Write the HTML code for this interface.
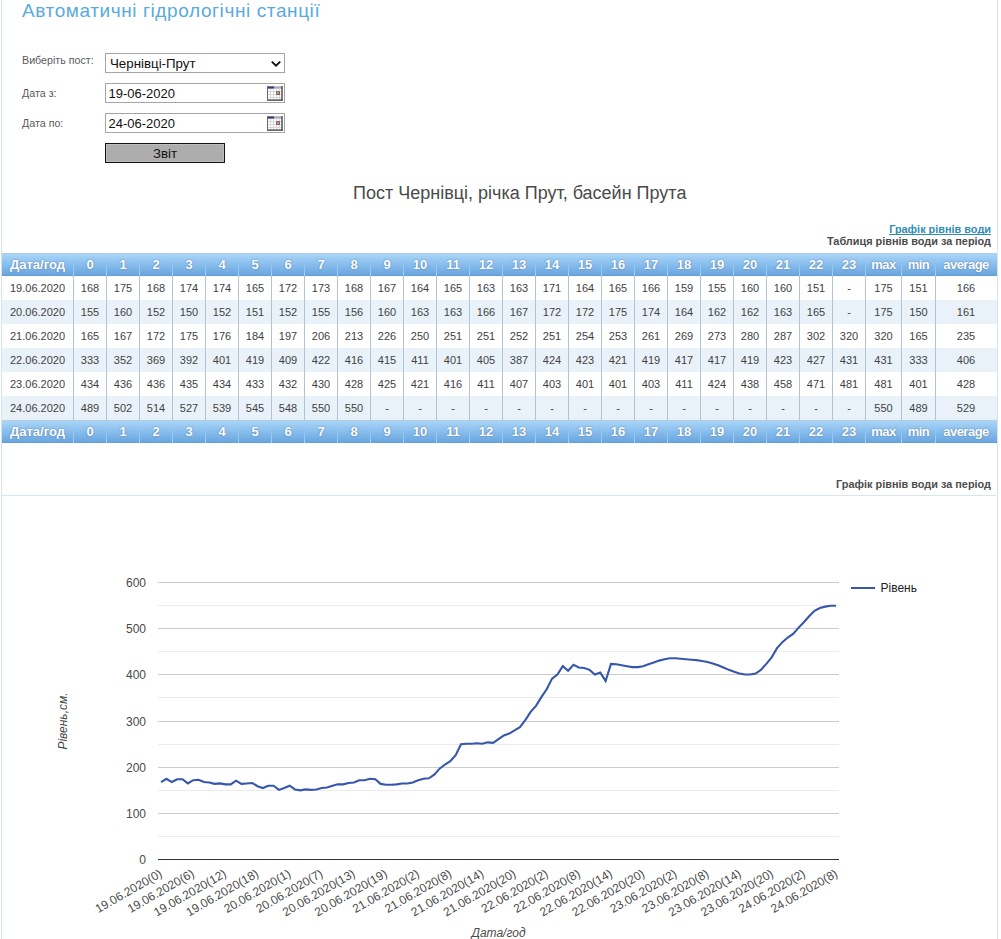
<!DOCTYPE html>
<html><head><meta charset="utf-8">
<style>
html,body{margin:0;padding:0;background:#fff;}
body{width:1001px;height:939px;position:relative;overflow:hidden;font-family:"Liberation Sans",sans-serif;}
.vl{position:absolute;top:0;width:1px;height:939px;background:#d3e5f0;}
.abs{position:absolute;white-space:nowrap;}
.title{left:22px;top:-0.5px;font-size:19px;letter-spacing:0.6px;color:#5aaadd;}
.lbl{left:22px;font-size:10.7px;color:#5a5a5a;}
.box{position:absolute;left:105px;width:178px;height:18px;border:1px solid #a5a5a5;background:#fff;}
.box span{position:absolute;left:2.5px;top:2px;font-size:13px;color:#111;}
.box span.s{left:4px;top:1.5px;font-size:13.3px;}
.btn{position:absolute;left:105px;top:143px;width:116px;height:16px;border:1px solid #111;box-shadow:inset 0 0 0 1px #bdbdbd;padding:1px;background:#adadae;font-size:13.3px;text-align:center;line-height:17px;color:#111;}
.h2{left:353px;top:183px;font-size:18px;color:#4a4a4a;}
.lnk{right:10px;top:223px;font-size:10.9px;font-weight:bold;color:#2f8db5;text-decoration:underline;text-decoration-skip-ink:none;}
.sub{right:10px;top:235px;font-size:10.9px;font-weight:bold;color:#4a4a4a;}
table{position:absolute;left:2px;top:253px;border-collapse:separate;border-spacing:0;table-layout:fixed;width:995px;}
th,td{padding:0;text-align:center;overflow:hidden;white-space:nowrap;}
tr.hd th{height:23px;font-size:13px;font-weight:bold;color:#fff;text-shadow:0 0 1.5px rgba(50,80,120,.75);border-right:1px solid transparent;border-image:linear-gradient(rgba(168,222,250,0) 35%,#a8defa 100%) 1;}
tr.hd th:last-child{border-image:none;}
tr.hd th{background:linear-gradient(#b4cde0 0,#b4cde0 1px,#a9d5f8 1px,#8cc0ee 45%,#6aa6df 95%,#5c9ad6 100%);}
td{height:24px;font-size:11px;color:#424242;border-right:1px solid #b3c2d0;}
th.ls{letter-spacing:-0.5px;}
td:last-child{border-right-color:#fff;}
tr.alt td:last-child{border-right-color:#e9f2f9;}
tr.alt td{background:#e9f2f9;}
.sub2{right:10px;top:478px;font-size:10.9px;font-weight:bold;color:#4d4d4d;}
.hl{position:absolute;left:1px;top:495px;width:995px;height:1px;background:#d6e6f0;}
svg{position:absolute;left:0;top:0;}
svg text{font-family:"Liberation Sans",sans-serif;font-size:12px;fill:#4a4a4a;}
</style></head><body>
<div class="vl" style="left:1px"></div>
<div class="vl" style="left:997px"></div>
<div class="abs title">Автоматичні гідрологічні станції</div>
<div class="abs lbl" style="top:54px">Виберіть пост:</div>
<div class="abs lbl" style="top:87px">Дата з:</div>
<div class="abs lbl" style="top:117px">Дата по:</div>
<div class="box" style="top:53px"><span class='s'>Чернівці-Прут</span>
<svg width="12" height="8" style="left:164px;top:6px" viewBox="0 0 12 8"><path d="M1.8,1.6 L6,5.6 L10.2,1.6" fill="none" stroke="#111" stroke-width="1.9"/></svg></div>
<div class="box" style="top:83px"><span>19-06-2020</span><svg width="17" height="15" style="left:160px;top:2px" viewBox="0 0 17 15">
<rect x="1" y="0" width="16" height="15" fill="#fff"/>
<rect x="1.5" y="0.3" width="7" height="2.4" fill="#3b3a70"/>
<rect x="8.5" y="0.3" width="7" height="2.4" fill="#aeaab2"/>
<g fill="#d8d8dc">
<rect x="1" y="5" width="15" height="1"/><rect x="1" y="8" width="15" height="1"/><rect x="1" y="11" width="15" height="1"/>
<rect x="4" y="2.7" width="1" height="11"/><rect x="7" y="2.7" width="1" height="11"/><rect x="10" y="2.7" width="1" height="11"/><rect x="13" y="2.7" width="1" height="11"/>
</g>
<rect x="10.8" y="5.8" width="2.5" height="2.5" fill="#fff" stroke="#7a3c32" stroke-width="1.1"/>
<rect x="1" y="13.5" width="15.5" height="1.2" fill="#2a2a2a"/>
<rect x="1" y="0" width="1" height="14" fill="#6a6a6a"/>
<rect x="15.4" y="0" width="1.2" height="14.7" fill="#2a2a2a"/>
</svg></div>
<div class="box" style="top:113px"><span>24-06-2020</span><svg width="17" height="15" style="left:160px;top:2px" viewBox="0 0 17 15">
<rect x="1" y="0" width="16" height="15" fill="#fff"/>
<rect x="1.5" y="0.3" width="7" height="2.4" fill="#3b3a70"/>
<rect x="8.5" y="0.3" width="7" height="2.4" fill="#aeaab2"/>
<g fill="#d8d8dc">
<rect x="1" y="5" width="15" height="1"/><rect x="1" y="8" width="15" height="1"/><rect x="1" y="11" width="15" height="1"/>
<rect x="4" y="2.7" width="1" height="11"/><rect x="7" y="2.7" width="1" height="11"/><rect x="10" y="2.7" width="1" height="11"/><rect x="13" y="2.7" width="1" height="11"/>
</g>
<rect x="10.8" y="5.8" width="2.5" height="2.5" fill="#fff" stroke="#7a3c32" stroke-width="1.1"/>
<rect x="1" y="13.5" width="15.5" height="1.2" fill="#2a2a2a"/>
<rect x="1" y="0" width="1" height="14" fill="#6a6a6a"/>
<rect x="15.4" y="0" width="1.2" height="14.7" fill="#2a2a2a"/>
</svg></div>
<div class="btn">Звіт</div>
<div class="abs h2">Пост Чернівці, річка Прут, басейн Прута</div>
<div class="abs lnk">Графік рівнів води</div>
<div class="abs sub">Таблиця рівнів води за період</div>
<table>
<tr class='hd'><th style='width:71px'>Дата/год</th><th style='width:32px'>0</th><th style='width:32px'>1</th><th style='width:32px'>2</th><th style='width:32px'>3</th><th style='width:32px'>4</th><th style='width:32px'>5</th><th style='width:32px'>6</th><th style='width:32px'>7</th><th style='width:32px'>8</th><th style='width:32px'>9</th><th style='width:32px'>10</th><th style='width:32px'>11</th><th style='width:32px'>12</th><th style='width:32px'>13</th><th style='width:32px'>14</th><th style='width:32px'>15</th><th style='width:32px'>16</th><th style='width:32px'>17</th><th style='width:32px'>18</th><th style='width:32px'>19</th><th style='width:32px'>20</th><th style='width:32px'>21</th><th style='width:32px'>22</th><th style='width:32px'>23</th><th style='width:35px' class=ls>max</th><th style='width:33px' class=ls>min</th><th style='width:60px' class=ls>average</th></tr>
<tr class=''><td>19.06.2020</td><td>168</td><td>175</td><td>168</td><td>174</td><td>174</td><td>165</td><td>172</td><td>173</td><td>168</td><td>167</td><td>164</td><td>165</td><td>163</td><td>163</td><td>171</td><td>164</td><td>165</td><td>166</td><td>159</td><td>155</td><td>160</td><td>160</td><td>151</td><td>-</td><td>175</td><td>151</td><td>166</td></tr><tr class='alt'><td>20.06.2020</td><td>155</td><td>160</td><td>152</td><td>150</td><td>152</td><td>151</td><td>152</td><td>155</td><td>156</td><td>160</td><td>163</td><td>163</td><td>166</td><td>167</td><td>172</td><td>172</td><td>175</td><td>174</td><td>164</td><td>162</td><td>162</td><td>163</td><td>165</td><td>-</td><td>175</td><td>150</td><td>161</td></tr><tr class=''><td>21.06.2020</td><td>165</td><td>167</td><td>172</td><td>175</td><td>176</td><td>184</td><td>197</td><td>206</td><td>213</td><td>226</td><td>250</td><td>251</td><td>251</td><td>252</td><td>251</td><td>254</td><td>253</td><td>261</td><td>269</td><td>273</td><td>280</td><td>287</td><td>302</td><td>320</td><td>320</td><td>165</td><td>235</td></tr><tr class='alt'><td>22.06.2020</td><td>333</td><td>352</td><td>369</td><td>392</td><td>401</td><td>419</td><td>409</td><td>422</td><td>416</td><td>415</td><td>411</td><td>401</td><td>405</td><td>387</td><td>424</td><td>423</td><td>421</td><td>419</td><td>417</td><td>417</td><td>419</td><td>423</td><td>427</td><td>431</td><td>431</td><td>333</td><td>406</td></tr><tr class=''><td>23.06.2020</td><td>434</td><td>436</td><td>436</td><td>435</td><td>434</td><td>433</td><td>432</td><td>430</td><td>428</td><td>425</td><td>421</td><td>416</td><td>411</td><td>407</td><td>403</td><td>401</td><td>401</td><td>403</td><td>411</td><td>424</td><td>438</td><td>458</td><td>471</td><td>481</td><td>481</td><td>401</td><td>428</td></tr><tr class='alt'><td>24.06.2020</td><td>489</td><td>502</td><td>514</td><td>527</td><td>539</td><td>545</td><td>548</td><td>550</td><td>550</td><td>-</td><td>-</td><td>-</td><td>-</td><td>-</td><td>-</td><td>-</td><td>-</td><td>-</td><td>-</td><td>-</td><td>-</td><td>-</td><td>-</td><td>-</td><td>550</td><td>489</td><td>529</td></tr>
<tr class='hd'><th style='width:71px'>Дата/год</th><th style='width:32px'>0</th><th style='width:32px'>1</th><th style='width:32px'>2</th><th style='width:32px'>3</th><th style='width:32px'>4</th><th style='width:32px'>5</th><th style='width:32px'>6</th><th style='width:32px'>7</th><th style='width:32px'>8</th><th style='width:32px'>9</th><th style='width:32px'>10</th><th style='width:32px'>11</th><th style='width:32px'>12</th><th style='width:32px'>13</th><th style='width:32px'>14</th><th style='width:32px'>15</th><th style='width:32px'>16</th><th style='width:32px'>17</th><th style='width:32px'>18</th><th style='width:32px'>19</th><th style='width:32px'>20</th><th style='width:32px'>21</th><th style='width:32px'>22</th><th style='width:32px'>23</th><th style='width:35px' class=ls>max</th><th style='width:33px' class=ls>min</th><th style='width:60px' class=ls>average</th></tr>
</table>
<div class="abs sub2">Графік рівнів води за період</div>
<div class="hl"></div>
<svg width="1001" height="939">
<rect x='158' y='836' width='681' height='1' fill='#ebebeb'/><rect x='158' y='813' width='681' height='1' fill='#cccccc'/><rect x='158' y='790' width='681' height='1' fill='#ebebeb'/><rect x='158' y='767' width='681' height='1' fill='#cccccc'/><rect x='158' y='744' width='681' height='1' fill='#ebebeb'/><rect x='158' y='721' width='681' height='1' fill='#cccccc'/><rect x='158' y='697' width='681' height='1' fill='#ebebeb'/><rect x='158' y='674' width='681' height='1' fill='#cccccc'/><rect x='158' y='651' width='681' height='1' fill='#ebebeb'/><rect x='158' y='628' width='681' height='1' fill='#cccccc'/><rect x='158' y='605' width='681' height='1' fill='#ebebeb'/><rect x='158' y='582' width='681' height='1' fill='#cccccc'/>
<rect x='158' y='859' width='681' height='1' fill='#333'/>
<text x='146' y='863.5' text-anchor='end'>0</text><text x='146' y='817.5' text-anchor='end'>100</text><text x='146' y='771.5' text-anchor='end'>200</text><text x='146' y='725.5' text-anchor='end'>300</text><text x='146' y='678.5' text-anchor='end'>400</text><text x='146' y='632.5' text-anchor='end'>500</text><text x='146' y='586.5' text-anchor='end'>600</text>
<path d="M161.08,781.44 L166.43,778.21 L171.79,781.44 L177.15,778.67 L182.50,778.67 L187.86,782.83 L193.21,779.59 L198.57,779.13 L203.93,781.44 L209.28,781.90 L214.64,783.29 L219.99,782.83 L225.35,783.75 L230.70,783.75 L236.06,780.06 L241.42,783.29 L246.77,782.83 L252.13,782.36 L257.48,785.60 L262.84,787.44 L268.20,785.13 L273.55,785.13 L278.91,789.29 L284.26,787.44 L289.62,785.13 L294.98,788.83 L300.33,789.75 L305.69,788.83 L311.04,789.29 L316.40,788.83 L321.76,787.44 L327.11,786.98 L332.47,785.13 L337.82,783.75 L343.18,783.75 L348.53,782.36 L353.89,781.90 L359.25,779.59 L364.60,779.59 L369.96,778.21 L375.31,778.67 L380.67,783.29 L386.03,784.21 L391.38,784.21 L396.74,783.75 L402.09,782.83 L407.45,782.83 L412.81,781.90 L418.16,779.59 L423.52,778.21 L428.87,777.75 L434.23,774.05 L439.59,768.05 L444.94,763.90 L450.30,760.66 L455.65,754.66 L461.01,743.58 L466.36,743.12 L471.72,743.12 L477.08,742.66 L482.43,743.12 L487.79,741.74 L493.14,742.20 L498.50,738.50 L503.86,734.81 L509.21,732.97 L514.57,729.73 L519.92,726.50 L525.28,719.58 L530.64,711.27 L535.99,705.26 L541.35,696.49 L546.70,688.64 L552.06,678.03 L557.41,673.87 L562.77,665.56 L568.13,670.18 L573.48,664.18 L578.84,666.95 L584.19,667.41 L589.55,669.25 L594.91,673.87 L600.26,672.02 L605.62,680.34 L610.97,663.25 L616.33,663.72 L621.69,664.64 L627.04,665.56 L632.40,666.49 L637.75,666.49 L643.11,665.56 L648.47,663.72 L653.82,661.87 L659.18,660.02 L664.53,658.64 L669.89,657.71 L675.24,657.71 L680.60,658.17 L685.96,658.64 L691.31,659.10 L696.67,659.56 L702.02,660.48 L707.38,661.41 L712.74,662.79 L718.09,664.64 L723.45,666.95 L728.80,669.25 L734.16,671.10 L739.52,672.95 L744.87,673.87 L750.23,673.87 L755.58,672.95 L760.94,669.25 L766.30,663.25 L771.65,656.79 L777.01,647.56 L782.36,641.56 L787.72,636.94 L793.07,633.25 L798.43,627.24 L803.79,621.70 L809.14,615.70 L814.50,610.16 L819.85,607.39 L825.21,606.01 L830.57,605.08 L835.92,605.08" transform="translate(0,0.6)" fill="none" stroke="#3657ab" stroke-width="2.1" stroke-linejoin="miter"/>
<rect x='851' y='587' width='24' height='2' fill="#3657ab"/>
<text x='880.5' y='592' style='fill:#222'>Рівень</text>
<text transform='translate(67,721) rotate(-90)' text-anchor='middle' font-style='italic'>Рівень,см.</text>
<text x='498.5' y='936.5' text-anchor='middle' font-style='italic'>Дата/год</text>
<text transform='translate(162.9,876) rotate(-30)' text-anchor='end'>19.06.2020(0)</text><text transform='translate(195.1,876) rotate(-30)' text-anchor='end'>19.06.2020(6)</text><text transform='translate(227.2,876) rotate(-30)' text-anchor='end'>19.06.2020(12)</text><text transform='translate(259.4,876) rotate(-30)' text-anchor='end'>19.06.2020(18)</text><text transform='translate(291.6,876) rotate(-30)' text-anchor='end'>20.06.2020(1)</text><text transform='translate(323.7,876) rotate(-30)' text-anchor='end'>20.06.2020(7)</text><text transform='translate(355.9,876) rotate(-30)' text-anchor='end'>20.06.2020(13)</text><text transform='translate(388.1,876) rotate(-30)' text-anchor='end'>20.06.2020(19)</text><text transform='translate(420.3,876) rotate(-30)' text-anchor='end'>21.06.2020(2)</text><text transform='translate(452.4,876) rotate(-30)' text-anchor='end'>21.06.2020(8)</text><text transform='translate(484.6,876) rotate(-30)' text-anchor='end'>21.06.2020(14)</text><text transform='translate(516.8,876) rotate(-30)' text-anchor='end'>21.06.2020(20)</text><text transform='translate(549.0,876) rotate(-30)' text-anchor='end'>22.06.2020(2)</text><text transform='translate(581.1,876) rotate(-30)' text-anchor='end'>22.06.2020(8)</text><text transform='translate(613.3,876) rotate(-30)' text-anchor='end'>22.06.2020(14)</text><text transform='translate(645.5,876) rotate(-30)' text-anchor='end'>22.06.2020(20)</text><text transform='translate(677.7,876) rotate(-30)' text-anchor='end'>23.06.2020(2)</text><text transform='translate(709.8,876) rotate(-30)' text-anchor='end'>23.06.2020(8)</text><text transform='translate(742.0,876) rotate(-30)' text-anchor='end'>23.06.2020(14)</text><text transform='translate(774.2,876) rotate(-30)' text-anchor='end'>23.06.2020(20)</text><text transform='translate(806.3,876) rotate(-30)' text-anchor='end'>24.06.2020(2)</text><text transform='translate(838.5,876) rotate(-30)' text-anchor='end'>24.06.2020(8)</text>
</svg>
</body></html>
